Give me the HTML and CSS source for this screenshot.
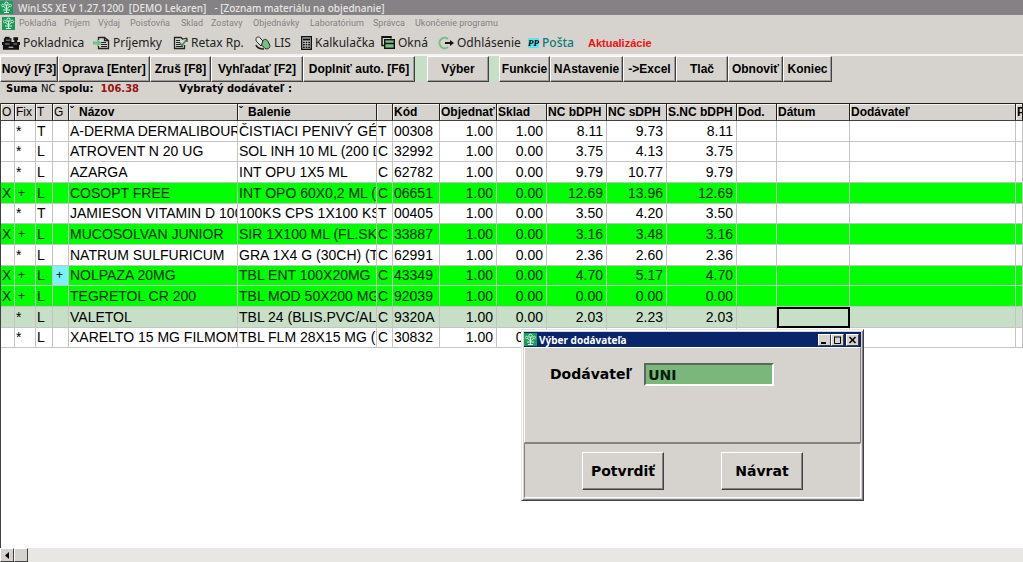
FILE: index.html
```html
<!DOCTYPE html>
<html lang="sk">
<head>
<meta charset="utf-8">
<title>WinLSS XE</title>
<link rel="stylesheet" href="styles.css">
</head>
<body>
<svg class="defs" aria-hidden="true">
  <symbol id="logo" viewBox="0 0 13 13">
    <rect width="13" height="13" fill="#1c9a5c"/>
    <path d="M6.500 3.500V12M3 5l3.500 3L10 5M3 9h7M4 11.500h5" stroke="#d9f5e4" stroke-width="1" fill="none"/>
    <circle cx="6.500" cy="2.800" r="1.700" fill="none" stroke="#d9f5e4"/>
    <circle cx="2.800" cy="4.500" r="1.300" fill="none" stroke="#b5e6ca"/>
    <circle cx="10.200" cy="4.500" r="1.300" fill="none" stroke="#b5e6ca"/>
  </symbol>
</svg>
<div class="app">
  <header class="titlebar">
    <svg class="logo"><use href="#logo"/></svg>
    <span>WinLSS XE V 1.27.1200</span><span>[DEMO Lekaren]</span><span class="doc">- [Zoznam materiálu na objednanie]</span>
  </header>
  <nav class="menu">
    <svg class="logo"><use href="#logo"/></svg>
    <button>Pokladňa</button><button>Príjem</button><button>Výdaj</button><button>Poisťovňa</button><button>Sklad</button><button>Zostavy</button><button>Objednávky</button><button>Laboratórium</button><button>Správca</button><button>Ukončenie programu</button>
  </nav>
  <div class="tools">
    <button><svg width="18" height="14" viewBox="0 0 19 14"><path d="M0 6h19v3H0zM1 9h17v5H1zM2 2h8v4H2zM12 1h5v3h-1v2h-3V4h-1z" fill="#111"/><path d="M3 0.500h5v2H3z" fill="#111"/><path d="M4 4h5M3 8h5M12 8h4" stroke="#9a9a96"/><path d="M7 11.500h5" stroke="#ddd"/></svg>Pokladnica</button>
    <button><svg width="17" height="14" viewBox="0 0 17 14"><path d="M5.500 4V1.500h6l4 3v8h-10V10M11.500 1.500v3h4" fill="none" stroke="#222" stroke-width="1.300"/><path d="M8 6.500h5M8 8.500h6M8 10.500h6" stroke="#222"/><path d="M0 5.500h4V3l4.500 4L4 11V8.500H0z" fill="#74bf82"/></svg>Príjemky</button>
    <button><svg width="15" height="14" viewBox="0 0 15 14"><path d="M11.500 9v3.500h-10v-11H8l2 2" fill="none" stroke="#222" stroke-width="1.300"/><path d="M3 4.500h4M3 6.500h4M3 8.500h6M3 10.500h7" stroke="#222"/><path d="M7 7l2 2.500L14 3" fill="none" stroke="#3b8b55" stroke-width="1.500"/><path d="M10 3l4-1v4" fill="none" stroke="#222"/></svg>Retax Rp.</button>
    <button><svg width="16" height="14" viewBox="0 0 16 14"><path d="M1 3c0-2 3-3 4-1l4 4-3 4-4-4C1 5 1 4 1 3z" fill="#e8e6e3" stroke="#222"/><path d="M8 4.500c2-2 4-1 5 1l2 4c0 3-3 4-5 3L6.500 9z" fill="#74bf82" stroke="#222"/><path d="M1 9c1 3 4 4 8 4" fill="none" stroke="#222" stroke-width="1.500"/></svg>LIS</button>
    <button><svg width="11" height="14" viewBox="0 0 11 14"><rect x=".7" y=".7" width="9.600" height="12.600" fill="#d6d3ce" stroke="#111" stroke-width="1.400"/><path d="M2 3.500h7" stroke="#111" stroke-width="2"/><path d="M2 6.500h7M2 8.800h7M2 11.200h7" stroke="#111" stroke-width="1.500" stroke-dasharray="1.800 .8"/></svg>Kalkulačka</button>
    <button><svg width="14" height="13" viewBox="0 0 14 13"><path d="M3 9.500H1v-9h9v2" fill="none" stroke="#111" stroke-width="1.500"/><path d="M1 1h9" stroke="#111" stroke-width="2"/><rect x="3.700" y="3.700" width="9.600" height="8.600" fill="#74bf82" stroke="#111" stroke-width="1.400"/><path d="M4 7.500h9" stroke="#111" stroke-width="1.500"/></svg>Okná</button>
    <button><svg width="17" height="14" viewBox="0 0 17 14"><path d="M11 3A5.200 5.200 0 1 0 11 11" fill="none" stroke="#74bf82" stroke-width="2"/><path d="M8 7h6" stroke="#111" stroke-width="2"/><path d="M13 4L17 7l-4 3z" fill="#111"/></svg>Odhlásenie</button>
    <button class="mail"><span class="pp">PP</span>Pošta</button>
    <button class="update">Aktualizácie</button>
  </div>
  <div class="actions">
    <button>Nový [F3]</button><button>Oprava [Enter]</button><button>Zruš [F8]</button><button>Vyhľadať [F2]</button><button>Doplniť auto. [F6]</button><i></i><button>Výber</button><i></i><button>Funkcie</button><button>NAstavenie</button><button>-&gt;Excel</button><button>Tlač</button><button>Obnoviť</button><button>Koniec</button>
  </div>
  <div class="summary">
    <span>Suma <span class="thin">NC</span> spolu:</span><span class="sum">106.38</span><span class="chosen">Vybratý dodávateľ :</span>
  </div>
  <main class="grid">
    <table>
      <colgroup><col class="c14"><col class="c21"><col class="c17"><col class="c16"><col class="c169"><col class="c139"><col class="c16"><col class="c47"><col class="c57"><col class="c50"><col class="c60"><col class="c60"><col class="c70"><col class="c40"><col class="c73"><col class="c166"><col></colgroup>
      <thead><tr><th class="light">O</th><th class="light">Fix</th><th class="light">T</th><th class="light">G</th><th><sup>ˇ</sup>Názov</th><th><sup>ˇ</sup>Balenie</th><th></th><th>Kód</th><th>Objednať</th><th>Sklad</th><th>NC bDPH</th><th>NC sDPH</th><th>S.NC bDPH</th><th>Dod.</th><th>Dátum</th><th>Dodávateľ</th><th>P</th></tr></thead>
      <tbody>
      <tr><td></td><td>*</td><td>T</td><td></td><td>A-DERMA DERMALIBOUR</td><td>ČISTIACI PENIVÝ GÉL</td><td>T</td><td>00308</td><td>1.00</td><td>1.00</td><td>8.11</td><td>9.73</td><td>8.11</td><td></td><td></td><td></td><td></td></tr>
      <tr><td></td><td>*</td><td>L</td><td></td><td>ATROVENT N 20 UG</td><td>SOL INH 10 ML (200 D</td><td>C</td><td>32992</td><td>1.00</td><td>0.00</td><td>3.75</td><td>4.13</td><td>3.75</td><td></td><td></td><td></td><td></td></tr>
      <tr><td></td><td>*</td><td>L</td><td></td><td>AZARGA</td><td>INT OPU 1X5 ML</td><td>C</td><td>62782</td><td>1.00</td><td>0.00</td><td>9.79</td><td>10.77</td><td>9.79</td><td></td><td></td><td></td><td></td></tr>
      <tr class="on"><td>X</td><td>+</td><td>L</td><td></td><td>COSOPT FREE</td><td>INT OPO 60X0,2 ML (4</td><td>C</td><td>06651</td><td>1.00</td><td>0.00</td><td>12.69</td><td>13.96</td><td>12.69</td><td></td><td></td><td></td><td></td></tr>
      <tr><td></td><td>*</td><td>T</td><td></td><td>JAMIESON VITAMIN D 100</td><td>100KS CPS 1X100 KS</td><td>T</td><td>00405</td><td>1.00</td><td>0.00</td><td>3.50</td><td>4.20</td><td>3.50</td><td></td><td></td><td></td><td></td></tr>
      <tr class="on"><td>X</td><td>+</td><td>L</td><td></td><td>MUCOSOLVAN JUNIOR</td><td>SIR 1X100 ML (FL.SKL</td><td>C</td><td>33887</td><td>1.00</td><td>0.00</td><td>3.16</td><td>3.48</td><td>3.16</td><td></td><td></td><td></td><td></td></tr>
      <tr><td></td><td>*</td><td>L</td><td></td><td>NATRUM SULFURICUM</td><td>GRA 1X4 G (30CH) (T</td><td>C</td><td>62991</td><td>1.00</td><td>0.00</td><td>2.36</td><td>2.60</td><td>2.36</td><td></td><td></td><td></td><td></td></tr>
      <tr class="on"><td>X</td><td>+</td><td>L</td><td class="flag">+</td><td>NOLPAZA 20MG</td><td>TBL ENT 100X20MG</td><td>C</td><td>43349</td><td>1.00</td><td>0.00</td><td>4.70</td><td>5.17</td><td>4.70</td><td></td><td></td><td></td><td></td></tr>
      <tr class="on"><td>X</td><td>+</td><td>L</td><td></td><td>TEGRETOL CR 200</td><td>TBL MOD 50X200 MG</td><td>C</td><td>92039</td><td>1.00</td><td>0.00</td><td>0.00</td><td>0.00</td><td>0.00</td><td></td><td></td><td></td><td></td></tr>
      <tr class="current"><td></td><td>*</td><td>L</td><td></td><td>VALETOL</td><td>TBL 24 (BLIS.PVC/AL</td><td>C</td><td>9320A</td><td>1.00</td><td>0.00</td><td>2.03</td><td>2.23</td><td>2.03</td><td></td><td class="focus"></td><td></td><td></td></tr>
      <tr><td></td><td>*</td><td>L</td><td></td><td>XARELTO 15 MG FILMOM</td><td>TBL FLM 28X15 MG (I</td><td>C</td><td>30832</td><td>1.00</td><td>0.00</td><td></td><td></td><td></td><td></td><td></td><td></td><td></td></tr>
      </tbody>
    </table>
  </main>
  <div class="scroll">
    <button aria-label="Vľavo"><svg width="4" height="7" viewBox="0 0 4 7"><path d="M4 0v7L0 3.500z"/></svg></button><button aria-label="Posuvník"></button>
  </div>
</div>
<form class="dialog" role="dialog" aria-labelledby="dialog-title">
  <div class="caption">
    <svg class="logo"><use href="#logo"/></svg>
    <span id="dialog-title">Výber dodávateľa</span>
    <button type="button" aria-label="Minimalizovať"><svg width="9" height="8"><path d="M1 7h5" stroke="#000" stroke-width="2"/></svg></button><button type="button" aria-label="Maximalizovať"><svg width="9" height="8"><path d="M1 1h7M1.500 1v6.500h6V1" stroke="#000" fill="none"/></svg></button><button type="button" class="close" aria-label="Zavrieť"><svg width="9" height="8"><path d="M1.500 1l6 6M7.500 1l-6 6" stroke="#000" stroke-width="1.500"/></svg></button>
  </div>
  <div class="field">
    <label for="supplier">Dodávateľ</label>
    <input id="supplier" type="text" value="UNI">
  </div>
  <div class="buttons"><button type="button">Potvrdiť</button><button type="button">Návrat</button></div>
</form>
</body>
</html>
```
FILE: styles.css
```css
* { box-sizing: border-box; }
body {
  margin: 0;
  background: #d6d3ce;
  color: #000;
  font-family: "Liberation Sans", Arial, sans-serif;
}
button { margin: 0; padding: 0; border: 0; background: none; color: inherit; font: inherit; white-space: nowrap; }
svg { flex: none; }
.defs { display: none; }
.app { display: flex; flex-direction: column; height: 100vh; overflow: hidden; }
.logo { width: 13px; height: 13px; }

.titlebar {
  display: flex; align-items: center; gap: 5px;
  height: 15px; flex: none;
  background: #848284; color: #e8e6e3;
  font: 500 10px/14px "Noto Sans", sans-serif;
  white-space: nowrap;
}
.titlebar .doc { margin-left: 3px; }
.menu {
  display: grid; align-items: center; justify-items: start;
  grid-template-columns: 17px 45px 34px 32px 51px 30px 42px 57px 63px 42px auto;
  height: 16px; padding-left: 2px; flex: none;
  color: #848284;
  font: 9px/14px Roboto, sans-serif;
}
.tools {
  display: grid; align-items: center;
  grid-template-columns: 91px 80px 82px 46px 80px 56px 91px 60px auto;
  height: 23px; padding-left: 2px; flex: none;
  color: #222;
  font: 12px/18px "Noto Sans", sans-serif;
}
.tools button { display: flex; align-items: center; gap: 3px; }
.mail { color: #10797b; }
.pp { background: #5fe4ee; color: #000; font: italic bold 9px/10px "Liberation Serif", serif; }
.tools .mail { font-weight: 500; }
.tools .update { color: #f01010; font: bold 11px/18px "Liberation Sans", Arial, sans-serif; }

.actions {
  display: grid; flex: none;
  grid-template-columns: 58px 92px 61px 92px 112px 12px 62px 10px 51px 73px 53px 52px 55px 49px;
  height: 28px;
  border-top: 2px solid #f4f3f1;
  font: bold 12px/22px "Liberation Sans", Arial, sans-serif;
}
.actions button {
  overflow: hidden;
  border: 1px solid; border-color: #fff #424142 #424142 #fff;
  box-shadow: inset -1px -1px #9c9a98;
}
.actions i { background: #c6dfc6; }

.summary {
  display: flex; align-items: center;
  height: 13px; padding-left: 6px; margin-bottom: 8px; flex: none;
  font: bold 10px/13px "DejaVu Sans", sans-serif;
}
.thin { font-weight: normal; }
.sum { margin-left: 7px; color: #9c1010; }
.chosen { margin-left: 40px; }

.grid { flex: 1; min-height: 0; overflow: hidden; background: #fff; border-left: 1px solid #424142; }
table { width: 100%; table-layout: fixed; border-collapse: separate; border-spacing: 0; }
th, td { overflow: hidden; white-space: nowrap; padding: 0 2px 0 1px; text-align: left; }
th {
  height: 18px;
  background: #d6d3ce;
  border-top: 1px solid #212021; border-bottom: 1px solid #424142; border-right: 1px solid #212021;
  box-shadow: inset 1px 1px #f4f3f1;
  font: bold 12px/15px "Liberation Sans", Arial, sans-serif;
}
th.light { font-weight: normal; padding: 0 1px; }
th sup { display: inline-block; width: 9px; font-size: 11px; line-height: 8px; vertical-align: 2px; }
td {
  height: 21px;
  border-right: 1px solid #c6c3c6; border-bottom: 1px solid #c6c3c6;
  font-size: 14px; line-height: 19px;
}
tr:nth-child(3n+2) td { height: 20px; }
td:nth-child(1), td:nth-child(7) { padding: 0 1px; }
td:nth-child(n+9):nth-child(-n+13) { padding-right: 3px; text-align: right; }
.on td { background: #0f0; color: #002400; }
.on td.flag { padding-left: 3px; background: #7bf3ff; font-size: 12px; }
.on td:nth-child(2) { padding-left: 3px; font-size: 12px; }
.current td { background: #c6dfc6; }
.current .focus { border: 2px solid #000; }
.c14 { width: 14px; } .c16 { width: 16px; } .c17 { width: 17px; } .c21 { width: 21px; }
.c40 { width: 40px; } .c47 { width: 47px; } .c50 { width: 50px; } .c57 { width: 57px; }
.c60 { width: 60px; } .c70 { width: 70px; } .c73 { width: 73px; }
.c139 { width: 139px; } .c166 { width: 166px; } .c169 { width: 169px; }

.scroll { display: flex; height: 14px; flex: none; background: #e9e7e4; }
.scroll button {
  display: grid; place-items: center;
  width: 14px; background: #d6d3ce;
  border: 1px solid; border-color: #fff #424142 #424142 #fff;
}

.dialog {
  position: absolute; left: 521px; top: 329px; width: 343px;
  padding: 2px;
  background: #d6d3ce;
  border: 1px solid; border-color: #e8e6e3 #424142 #424142 #e8e6e3;
  box-shadow: inset 1px 1px #fff, inset -1px -1px #848284;
}
.caption {
  display: flex; align-items: center;
  height: 15px; padding-right: 2px;
  background: #08246b; color: #fff;
  font: bold 10px/14px "Noto Sans", sans-serif;
}
.caption span { flex: 1; padding-left: 2px; }
.caption button {
  display: grid; place-items: center;
  width: 13px; height: 12px; background: #d6d3ce;
  border: 1px solid; border-color: #fff #424142 #424142 #fff;
}
.caption .close { margin-left: 2px; }
.field {
  display: flex; align-items: flex-start; gap: 12px;
  height: 96px; padding: 15px 0 0 25px;
  border: 1px solid; border-color: #fff #848284 #848284 #fff;
  font: bold 14px/22px "DejaVu Sans", sans-serif;
}
.field input {
  width: 130px; height: 23px; padding: 0 2px;
  background: #7bb67b; color: #00200a;
  border: 2px solid; border-color: #5a6a5a #fff #fff #5a6a5a;
  border-radius: 0; outline: 0; font: inherit;
}
.buttons {
  display: flex; gap: 57px; padding: 8px 57px 7px;
  border: 1px solid; border-color: #848284 #fff #fff #848284;
  font: bold 14px/20px "DejaVu Sans", sans-serif;
}
.buttons button {
  width: 82px; height: 38px;
  border: 1px solid; border-color: #fff #424142 #424142 #fff;
  box-shadow: inset -1px -1px #848284;
}
```
